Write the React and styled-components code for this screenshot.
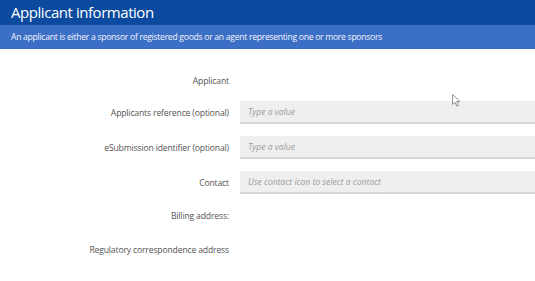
import React from "react";
import styled, { createGlobalStyle } from "styled-components";

const Global = createGlobalStyle`
  html, body { margin: 0; padding: 0; background: #ffffff; }
  body { font-family: "Open Sans", "Noto Sans", sans-serif; overflow: hidden; }
  * { box-sizing: border-box; }
`;

const Page = styled.div`
  position: relative;
  width: 535px;
  height: 281px;
  background: #fff;
`;

const TitleBar = styled.header`
  height: 25px;
  background: #0b4a9e;
  display: flex;
  align-items: center;
  padding-left: 11px;
`;

const Title = styled.h1`
  margin: 0;
  font-size: 15px;
  letter-spacing: -0.45px;
  font-weight: 400;
  color: #ffffff;
  line-height: 1;
`;

const InfoBand = styled.div`
  height: 24px;
  background: #3b6fc6;
  display: flex;
  align-items: center;
  padding-left: 11px;
  font-size: 8.6px;
  letter-spacing: -0.28px;
  color: #f2f5fb;
`;

const Form = styled.div`
  display: grid;
  grid-template-columns: 240px 1fr;
  row-gap: 12px;
  padding-top: 24px;
`;

const Label = styled.div`
  height: ${(p) => p.$h}px;
  display: flex;
  align-items: center;
  justify-content: flex-end;
  padding-right: 11px;
  font-size: 8.6px;
  letter-spacing: -0.15px;
  color: #555;
  white-space: nowrap;
`;

const Field = styled.div`
  height: ${(p) => p.$h}px;
  display: flex;
  align-items: center;
`;

const Input = styled.input`
  width: 100%;
  height: 23px;
  border: none;
  border-bottom: 2px solid #d7d7d7;
  background: #efefef;
  padding: 0 8px;
  font-family: inherit;
  font-size: 8.6px;
  outline: none;
  &::placeholder {
    color: #9c9c9c;
    font-style: italic;
  }
`;

const Cursor = styled.svg`
  position: absolute;
  left: 452px;
  top: 94px;
`;

const rows = [
  { label: "Applicant", h: 16 },
  { label: "Applicants reference (optional)", h: 23, placeholder: "Type a value" },
  { label: "eSubmission identifier (optional)", h: 23, placeholder: "Type a value" },
  { label: "Contact", h: 23, placeholder: "Use contact icon to select a contact" },
  { label: "Billing address:", h: 20 },
  { label: "Regulatory correspondence address", h: 24 },
];

export default function App() {
  return (
    <Page>
      <Global />
      <TitleBar>
        <Title>Applicant information</Title>
      </TitleBar>
      <InfoBand>
        An applicant is either a sponsor of registered goods or an agent representing one or more sponsors
      </InfoBand>
      <Form>
        {rows.map((r) => (
          <React.Fragment key={r.label}>
            <Label $h={r.h}>{r.label}</Label>
            <Field $h={r.h}>
              {r.placeholder ? <Input placeholder={r.placeholder} /> : null}
            </Field>
          </React.Fragment>
        ))}
      </Form>
      <Cursor width="9" height="13" viewBox="0 0 9 13">
        <path d="M0.5 0.5 L0.5 10.5 L3 8.2 L4.8 12.2 L6.3 11.5 L4.6 7.6 L8 7.6 Z" fill="#fff" stroke="#777" strokeWidth="0.8" strokeLinejoin="round" />
      </Cursor>
    </Page>
  );
}
